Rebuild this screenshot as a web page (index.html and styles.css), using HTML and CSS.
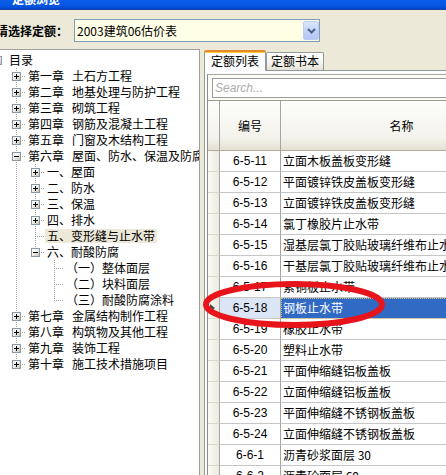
FILE: index.html
```html
<!DOCTYPE html>
<html lang="zh-CN">
<head>
<meta charset="utf-8">
<title>定额浏览</title>
<link rel="stylesheet" href="styles.css">
</head>
<body>
<div class="window">
  <div class="titlebar"><span class="title-text">定额浏览</span></div>
  <div class="toolbar">
    <span class="label">请选择定额：</span>
    <div class="combo">
      <span class="combo-text">2003建筑06估价表</span>
      <span class="combo-btn"><svg width="9" height="6" viewBox="0 0 9 6"><polyline points="1,1 4.5,4.5 8,1" fill="none" stroke="#4d6185" stroke-width="2"/></svg></span>
    </div>
  </div>
  <div class="main">
    <div class="tree">
      <div class="node"><span class="cell"><i class="btn"></i></span><span class="text">目录</span></div>
      <div class="node"><span class="cell"></span><span class="cell t"><i class="btn plus"></i></span><span class="text"><span class="ch">第一章</span>土石方工程</span></div>
      <div class="node"><span class="cell"></span><span class="cell t"><i class="btn plus"></i></span><span class="text"><span class="ch">第二章</span>地基处理与防护工程</span></div>
      <div class="node"><span class="cell"></span><span class="cell t"><i class="btn plus"></i></span><span class="text"><span class="ch">第三章</span>砌筑工程</span></div>
      <div class="node"><span class="cell"></span><span class="cell t"><i class="btn plus"></i></span><span class="text"><span class="ch">第四章</span>钢筋及混凝土工程</span></div>
      <div class="node"><span class="cell"></span><span class="cell t"><i class="btn plus"></i></span><span class="text"><span class="ch">第五章</span>门窗及木结构工程</span></div>
      <div class="node"><span class="cell"></span><span class="cell t"><i class="btn"></i></span><span class="text"><span class="ch">第六章</span>屋面、防水、保温及防腐</span></div>
      <div class="node"><span class="cell"></span><span class="cell v"></span><span class="cell t"><i class="btn plus"></i></span><span class="text">一、屋面</span></div>
      <div class="node"><span class="cell"></span><span class="cell v"></span><span class="cell t"><i class="btn plus"></i></span><span class="text">二、防水</span></div>
      <div class="node"><span class="cell"></span><span class="cell v"></span><span class="cell t"><i class="btn plus"></i></span><span class="text">三、保温</span></div>
      <div class="node"><span class="cell"></span><span class="cell v"></span><span class="cell t"><i class="btn plus"></i></span><span class="text">四、排水</span></div>
      <div class="node"><span class="cell"></span><span class="cell v"></span><span class="cell t"></span><span class="text sel">五、变形缝与止水带</span></div>
      <div class="node"><span class="cell"></span><span class="cell v"></span><span class="cell l"><i class="btn"></i></span><span class="text">六、耐酸防腐</span></div>
      <div class="node"><span class="cell"></span><span class="cell v"></span><span class="cell"></span><span class="cell t"></span><span class="text">（一）整体面层</span></div>
      <div class="node"><span class="cell"></span><span class="cell v"></span><span class="cell"></span><span class="cell t"></span><span class="text">（二）块料面层</span></div>
      <div class="node"><span class="cell"></span><span class="cell v"></span><span class="cell"></span><span class="cell l"></span><span class="text">（三）耐酸防腐涂料</span></div>
      <div class="node"><span class="cell"></span><span class="cell t"><i class="btn plus"></i></span><span class="text"><span class="ch">第七章</span>金属结构制作工程</span></div>
      <div class="node"><span class="cell"></span><span class="cell t"><i class="btn plus"></i></span><span class="text"><span class="ch">第八章</span>构筑物及其他工程</span></div>
      <div class="node"><span class="cell"></span><span class="cell t"><i class="btn plus"></i></span><span class="text"><span class="ch">第九章</span>装饰工程</span></div>
      <div class="node"><span class="cell"></span><span class="cell l"><i class="btn plus"></i></span><span class="text"><span class="ch">第十章</span>施工技术措施项目</span></div>
    </div>
    <div class="right">
      <div class="tabs">
        <div class="tab active">定额列表</div>
        <div class="tab">定额书本</div>
      </div>
      <div class="tabbody">
        <div class="frame">
          <div class="search">Search...</div>
          <div class="grid">
            <div class="c rh hdr"></div><div class="c hd">编号</div><div class="c hd">名称</div>
            <div class="c rh"></div><div class="c num">6-5-11</div><div class="c name">立面木板盖板变形缝</div>
            <div class="c rh"></div><div class="c num">6-5-12</div><div class="c name">平面镀锌铁皮盖板变形缝</div>
            <div class="c rh"></div><div class="c num">6-5-13</div><div class="c name">立面镀锌铁皮盖板变形缝</div>
            <div class="c rh"></div><div class="c num">6-5-14</div><div class="c name">氯丁橡胶片止水带</div>
            <div class="c rh"></div><div class="c num">6-5-15</div><div class="c name">湿基层氯丁胶贴玻璃纤维布止水带</div>
            <div class="c rh"></div><div class="c num">6-5-16</div><div class="c name">干基层氯丁胶贴玻璃纤维布止水带</div>
            <div class="c rh"></div><div class="c num">6-5-17</div><div class="c name">紫铜板止水带</div>
            <div class="c rh cur"><i class="tri"></i></div><div class="c num sel-num">6-5-18</div><div class="c name sel-name">钢板止水带</div>
            <div class="c rh"></div><div class="c num">6-5-19</div><div class="c name">橡胶止水带</div>
            <div class="c rh"></div><div class="c num">6-5-20</div><div class="c name">塑料止水带</div>
            <div class="c rh"></div><div class="c num">6-5-21</div><div class="c name">平面伸缩缝铝板盖板</div>
            <div class="c rh"></div><div class="c num">6-5-22</div><div class="c name">立面伸缩缝铝板盖板</div>
            <div class="c rh"></div><div class="c num">6-5-23</div><div class="c name">平面伸缩缝不锈钢板盖板</div>
            <div class="c rh"></div><div class="c num">6-5-24</div><div class="c name">立面伸缩缝不锈钢板盖板</div>
            <div class="c rh"></div><div class="c num">6-6-1</div><div class="c name">沥青砂浆面层 30</div>
            <div class="c rh"></div><div class="c num">6-6-2</div><div class="c name">沥青砼面层 60</div>
          </div>
        </div>
      </div>
    </div>
  </div>
</div>
<svg class="mark" width="446" height="475" viewBox="0 0 446 475"><ellipse cx="294" cy="304.5" rx="88" ry="20.5" fill="none" stroke="#e8141c" stroke-width="6"/></svg>
</body>
</html>
```

FILE: styles.css
```css
* { box-sizing: border-box; margin: 0; padding: 0; }
html, body { width: 446px; height: 475px; overflow: hidden; }
body {
  position: relative;
  background: #ece9d8;
  font-family: "Noto Sans CJK SC", "Liberation Sans", sans-serif;
  font-size: 12px;
  color: #000;
}
.window { display: flex; flex-direction: column; height: 475px; }

.titlebar {
  flex: none;
  height: 10px;
  display: flex;
  overflow: hidden;
  background: linear-gradient(#0a5ee9, #0656e3 60%, #0346cf);
  border-bottom: 1px solid #1941a5;
}
.title-text {
  color: #fff;
  font-weight: bold;
  font-size: 12px;
  line-height: 12px;
  height: 12px;
  margin: -7px 0 0 12px;
}

.toolbar {
  flex: none;
  height: 39px;
  padding-top: 2px;
  display: flex;
  align-items: center;
  gap: 6px;
}
.label { font-weight: bold; margin-left: -4px; line-height: 16px; white-space: nowrap; }
.combo {
  flex: none;
  width: 246px;
  height: 23px;
  border: 1px solid #7f9db9;
  background: #ffffe6;
  display: flex;
  align-items: center;
  padding-left: 2px;
}
.combo-text { flex: 1; line-height: 16px; }
.combo-btn {
  flex: none;
  width: 16px;
  height: 19px;
  display: flex;
  align-items: center;
  justify-content: center;
  border: 1px solid #bacdf7;
  border-radius: 2px;
  background: linear-gradient(#dce6fc, #c3d3f8 50%, #b3c7f4);
}

.main { flex: 1; min-height: 0; display: flex; gap: 4px; }

.tree {
  flex: none;
  width: 200px;
  background: #fff;
  border-top: 1px solid #a0a0a0;
  border-right: 1px solid #a0a0a0;
  overflow: hidden;
  padding-top: 2px;
}
.node {
  display: flex;
  height: 16px;
  margin-left: -12px;
  white-space: nowrap;
}
.cell {
  flex: none;
  width: 19px;
  height: 16px;
  display: flex;
  justify-content: center;
  align-items: flex-start;
}
.cell.v {
  background: repeating-linear-gradient(to bottom, #a0a0a0 0 1px, transparent 1px 2px) 9px 0 / 1px 100% no-repeat;
}
.cell.t {
  background:
    repeating-linear-gradient(to bottom, #a0a0a0 0 1px, transparent 1px 2px) 9px 0 / 1px 100% no-repeat,
    repeating-linear-gradient(to right, #a0a0a0 0 1px, transparent 1px 2px) 9px 8px / 10px 1px no-repeat;
}
.cell.l {
  background:
    repeating-linear-gradient(to bottom, #a0a0a0 0 1px, transparent 1px 2px) 9px 0 / 1px 9px no-repeat,
    repeating-linear-gradient(to right, #a0a0a0 0 1px, transparent 1px 2px) 9px 8px / 10px 1px no-repeat;
}
.btn {
  display: block;
  width: 9px;
  height: 9px;
  margin-top: 4px;
  border: 1px solid #8a98a6;
  background:
    linear-gradient(#000, #000) center / 5px 1px no-repeat,
    linear-gradient(135deg, #ffffff 25%, #c8c4b6);
}
.btn.plus {
  background:
    linear-gradient(#000, #000) center / 5px 1px no-repeat,
    linear-gradient(#000, #000) center / 1px 5px no-repeat,
    linear-gradient(135deg, #ffffff 25%, #c8c4b6);
}
.text {
  align-self: center;
  line-height: 14px;
  height: 14px;
  padding: 0 2px;
}
.text.sel { background: #ece9d8; }
.ch { margin-right: 8px; }

.right {
  flex: none;
  width: 330px;
  display: flex;
  flex-direction: column;
  min-height: 0;
}
.tabs {
  flex: none;
  height: 22px;
  display: flex;
  align-items: flex-end;
  border-bottom: 1px solid #919b9c;
}
.tab {
  height: 18px;
  line-height: 16px;
  padding: 0 4px;
  border: 1px solid #919b9c;
  border-bottom: none;
  border-radius: 2px 2px 0 0;
  background: linear-gradient(#ffffff, #f4f3ee 60%, #e3e1d6);
  white-space: nowrap;
}
.tab.active {
  height: 21px;
  margin-bottom: -1px;
  padding: 0 6px;
  line-height: 18px;
  border-top: 2px solid #e68b2c;
  box-shadow: inset 0 1px 0 #ffc83c;
  background: #fcfcfe;
}
.tabbody {
  flex: 1;
  min-height: 0;
  border-left: 1px solid #919b9c;
  background: #fcfcfe;
  padding: 3px 0 0 2px;
}
.frame {
  height: 100%;
  border-top: 1px solid #aca899;
  border-left: 1px solid #8f8c80;
  background: #fbfbf8;
  padding-top: 3px;
}
.search {
  margin-left: 4px;
  height: 20px;
  border: 1px solid #9a9a9a;
  background: #fff;
  padding-left: 2px;
  font-family: "Liberation Sans", sans-serif;
  font-style: italic;
  font-size: 12px;
  line-height: 18px;
  color: #adadad;
}
.grid {
  margin-top: 2px;
  border-top: 1px solid #9d9a8e;
  display: grid;
  grid-template-columns: 12px 61px 242px;
  grid-template-rows: 50px;
  grid-auto-rows: 21px;
  background: #fff;
}
.c {
  border-right: 1px solid #a4a4a4;
  border-bottom: 1px solid #c6c6c6;
  line-height: 20px;
  white-space: nowrap;
  overflow: hidden;
}
.rh {
  background: linear-gradient(to right, #fbfaf5, #ebe9df);
  border-bottom-color: #d9d6ca;
  display: flex;
  align-items: center;
}
.hd, .hdr {
  background: linear-gradient(#fdfdfb, #f3f2ec 75%, #e4e1d4);
  border-bottom-color: #b0ad9f;
}
.hd { display: flex; align-items: center; justify-content: center; }
.num { text-align: center; font-family: "Liberation Sans", sans-serif; }
.name { padding-left: 2px; }
.sel-num { background: #dbe5f6; }
.sel-name {
  background: #316ac5;
  color: #fff;
  outline: 1px dotted #d9c27a;
  outline-offset: -1px;
}
.tri {
  display: block;
  margin-left: 2px;
  width: 0;
  height: 0;
  border-left: 5px solid #4a4a4a;
  border-top: 4px solid transparent;
  border-bottom: 4px solid transparent;
}

.mark { position: absolute; left: 0; top: 0; pointer-events: none; }
```
